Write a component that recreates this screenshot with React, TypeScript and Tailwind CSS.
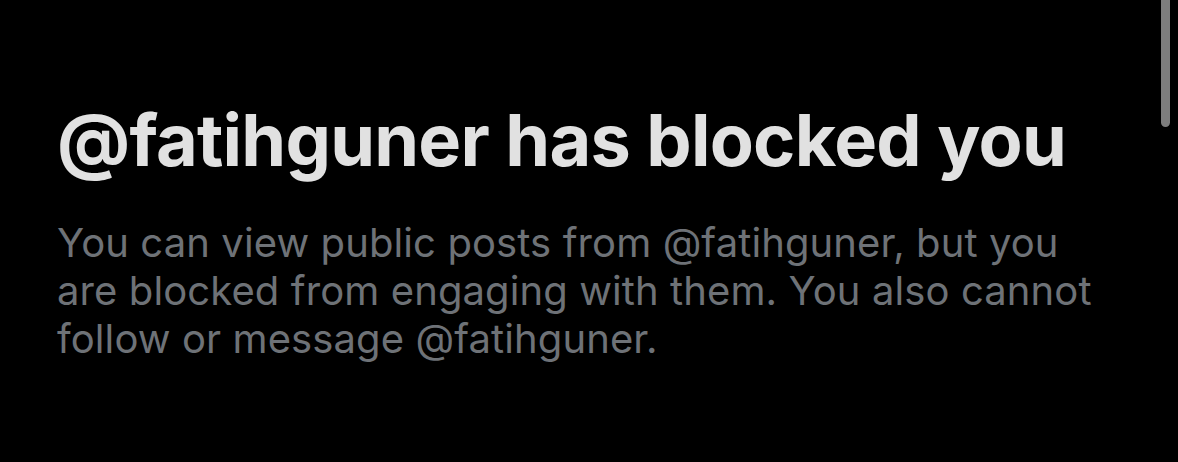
export default function App() {
  return (
    <div className="relative w-[1178px] h-[462px] overflow-hidden bg-black font-['Inter',sans-serif]">
      <div className="pl-[57px] pr-[60px] pt-[96px]">
        <h1 className="text-[72px] leading-[88px] font-bold tracking-[-0.75px] text-[#e1e1e1]">
          @fatihguner has blocked you
        </h1>
        <p className="mt-[35px] text-[40px] leading-[48px] tracking-[0.1px] text-[#6e7277] whitespace-nowrap">
          You can view public posts from @fatihguner, but you
          <br />
          are blocked from engaging with them. You also cannot
          <br />
          follow or message @fatihguner.
        </p>
      </div>
      <div className="absolute right-[8px] top-0 h-[127px] w-[9px] rounded-b-full bg-[#7d7d7d]" />
    </div>
  )
}
